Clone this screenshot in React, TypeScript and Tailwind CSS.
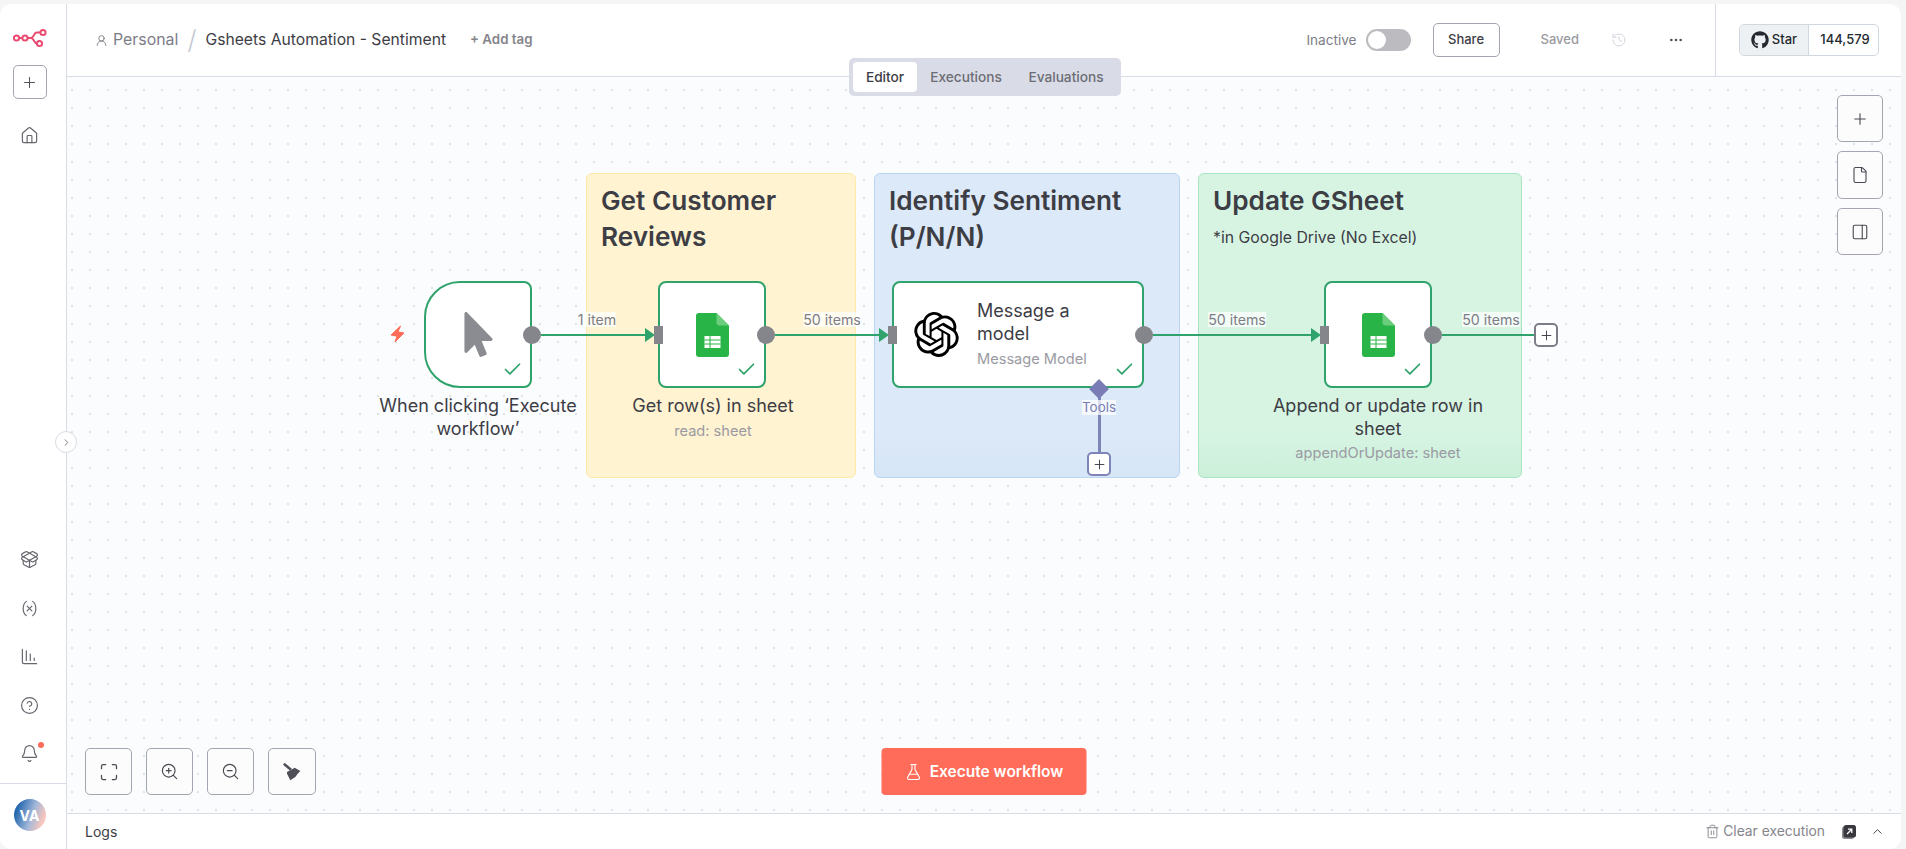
import type { ReactNode } from 'react'
import {
  Check, ChartColumnDecreasing, ChevronRight, ChevronUp, CircleHelp, Bell, Ellipsis, File,
  FlaskConical, History, House, Maximize, PackageOpen, PanelRight, Plus, Trash2, UserRound,
  Variable, ZoomIn, ZoomOut,
} from 'lucide-react'
import { FaGithub, FaMousePointer } from 'react-icons/fa'
import { SiOpenai } from 'react-icons/si'

function Logo() {
  return (
    <svg width="34" height="20" viewBox="0 0 34 20" fill="none" stroke="#ea4b71" strokeWidth="2">
      <circle cx="3.5" cy="10" r="2.6" />
      <circle cx="12" cy="10" r="2.6" />
      <circle cx="30" cy="4.5" r="2.6" />
      <circle cx="26.5" cy="15.5" r="2.6" />
      <path d="M6 10h3.4M14.6 10h3.4c3 0 2.6-5.5 6-5.5h3.4M18 10c3 0 3 5.5 6 5.5" />
    </svg>
  )
}

function SheetsIcon() {
  return (
    <svg width="33" height="44" viewBox="0 0 33 44">
      <path d="M20.5 0H3a3 3 0 0 0-3 3v38a3 3 0 0 0 3 3h27a3 3 0 0 0 3-3V12.5z" fill="#28b446" />
      <path d="M20.5 0v9.5a3 3 0 0 0 3 3H33z" fill="#6ace7c" />
      <path d="M8.5 23h16v12h-16z" fill="#fff" />
      <path d="M8.5 27h16M8.5 31h16M14 23v12" stroke="#28b446" strokeWidth="1" />
    </svg>
  )
}

function PopoutIcon() {
  return (
    <svg width="14" height="14" viewBox="0 0 14 14">
      <rect x="0" y="1.5" width="12" height="12.5" rx="2.5" fill="#8a8a90" />
      <rect x="1.5" y="0" width="12.5" height="12.5" rx="2.5" fill="#38383e" />
      <path d="M5 9l4.5-4.5M6 4.2h3.8V8" stroke="#fff" strokeWidth="1.3" fill="none" />
    </svg>
  )
}

function BroomIcon() {
  return (
    <svg width="18" height="18" viewBox="0 0 18 18" fill="#4f4f57">
      <path d="M0.8 0.8L8 6.8" stroke="#4f4f57" strokeWidth="2.6" />
      <path d="M4 9l7.7-4.3L17.3 8l-2.6 2.7-2.4 3.3-5 3.3-3.3-6.6z" />
    </svg>
  )
}

function BoltIcon() {
  return (
    <svg width="15" height="18" viewBox="0 0 15 18" className="absolute top-[248px] left-[323px]">
      <path
        d="M10.5 1L1 10l6 1.2L5 17l9-9-6-1.2z"
        fill="#ff6d5a"
        stroke="#ff6d5a"
        strokeWidth="1"
        strokeLinejoin="round"
      />
    </svg>
  )
}

function CanvasButton({ className, children }: { className?: string; children: ReactNode }) {
  return (
    <button className={`flex items-center justify-center rounded-[5px] border border-[#a3a5b0] bg-[#fcfcfd] text-[#4a4a52] ${className ?? ''}`}>
      {children}
    </button>
  )
}

function SideIcon({ children }: { children: ReactNode }) {
  return <div className="relative flex h-[48.5px] w-[33px] items-center justify-center text-[#66666e]">{children}</div>
}

function Sticky({ className, title, note }: { className: string; title: string; note?: string }) {
  return (
    <div className={`absolute top-[96px] h-[305px] rounded-[6px] border px-[14px] pt-[9px] ${className}`}>
      <h2 className="text-[26.2px] leading-[36px] font-semibold text-[#3d3d45]">{title}</h2>
      {note && <p className="mt-[8px] text-[15.8px] leading-[22px] text-[#3d3d45]">{note}</p>}
    </div>
  )
}

function NodeBox({ className, children }: { className: string; children: ReactNode }) {
  return (
    <div className={`absolute top-[204px] flex h-[107px] items-center border-2 border-[#2fa36b] bg-white ${className}`}>
      {children}
      <Check size={21} strokeWidth={2} className="absolute right-[7px] bottom-[6px] text-[#2fa36b]" />
    </div>
  )
}

function NodeLabel({ className, title, sub }: { className: string; title: string; sub?: string }) {
  return (
    <div className={`absolute top-[318px] w-[232px] text-center ${className}`}>
      <div className="text-[18px] leading-[22.6px] font-normal text-[#3d3d45]">{title}</div>
      {sub && <div className="mt-[3px] text-[14.6px] leading-[20px] text-[#9a9aa2]">{sub}</div>}
    </div>
  )
}

function EdgeLabel({ className, children }: { className: string; children: ReactNode }) {
  return <span className={`absolute top-[235px] -translate-x-1/2 bg-[#ffffffb8] text-[14.2px] leading-[15px] whitespace-nowrap text-[#7d7d87] ${className}`}>{children}</span>
}

function Port({ className }: { className: string }) {
  return <div className={`absolute top-[249px] h-[18px] w-[18px] rounded-full bg-[#85858c] ${className}`} />
}

function Input({ className }: { className: string }) {
  return <div className={`absolute top-[249px] h-[18px] w-[9px] bg-[#85858c] ${className}`} />
}

function Arrow({ className }: { className: string }) {
  return (
    <svg width="10" height="14" viewBox="0 0 10 14" className={`absolute top-[251px] ${className}`}>
      <path d="M0 0l10 7-10 7z" fill="#2fa36b" />
    </svg>
  )
}

function Edge({ className }: { className: string }) {
  return <div className={`absolute top-[256.5px] h-[2.5px] bg-[#2fa36b] ${className}`} />
}

export default function App() {
  return (
    <div className="flex h-screen w-screen overflow-hidden bg-[#f5f5f5] pt-[4px] pr-[5px] font-['Inter',sans-serif]">
      <div className="flex min-w-0 flex-1 overflow-hidden rounded-xl bg-white">

        {/* ── Sidebar ─────────────────────────────────────────── */}
        <aside className="relative z-20 flex w-[67px] shrink-0 flex-col border-r border-[#d9dce6] bg-white">
          <div className="flex flex-1 flex-col items-center pt-[24px] pr-[7px]">
            <Logo />
            <button className="mt-[17px] flex h-[34px] w-[34px] items-center justify-center rounded-[5px] border border-[#a3a5b0] text-[#55555d]">
              <Plus size={17} strokeWidth={1.5} />
            </button>
            <div className="mt-[12px]">
              <SideIcon><House size={19} strokeWidth={1.5} /></SideIcon>
            </div>
            <div className="mt-auto mb-[5px] flex flex-col items-center">
              <SideIcon><PackageOpen size={19} strokeWidth={1.5} /></SideIcon>
              <SideIcon><Variable size={19} strokeWidth={1.5} /></SideIcon>
              <SideIcon><ChartColumnDecreasing size={19} strokeWidth={1.5} /></SideIcon>
              <SideIcon><CircleHelp size={19} strokeWidth={1.5} /></SideIcon>
              <SideIcon>
                <Bell size={19} strokeWidth={1.5} />
                <span className="absolute top-[12px] right-[2px] h-[6px] w-[6px] rounded-full bg-[#ff6d5a]" />
              </SideIcon>
            </div>
          </div>
          <div className="flex h-[66px] items-start justify-center border-t border-[#d9dce6] pt-[15px] pr-[7px]">
            <div className="flex h-[32px] w-[32px] items-center justify-center rounded-full bg-[linear-gradient(110deg,#2568b0_15%,#a3b8d8_55%,#f9c7bd_85%)] text-[14px] font-bold text-white">
              VA
            </div>
          </div>
          <button className="absolute top-[427px] -right-[11px] flex h-[22px] w-[22px] items-center justify-center rounded-full border border-[#d9dce6] bg-white text-[#6d6d75]">
            <ChevronRight size={11} />
          </button>
        </aside>

        <main className="flex min-w-0 flex-1 flex-col">

          {/* ── Header ───────────────────────────────────────── */}
          <header className="flex h-[73px] shrink-0 items-center justify-between border-b border-[#d9dce6] pl-[28px]">
            <div className="flex items-center text-[#3d3d45]">
              <UserRound size={13} strokeWidth={1.5} className="text-[#6d6d75]" />
              <span className="ml-[5px] text-[15.9px] text-[#7d7d87]">Personal</span>
              <span className="mx-[9px] text-[26px] leading-none font-light text-[#c5c8d2]">/</span>
              <span className="text-[15.7px]">Gsheets Automation - Sentiment</span>
              <span className="ml-[24px] text-[13.3px] font-semibold text-[#85858c]">+ Add tag</span>
            </div>
            <div className="flex h-full items-center">
              <span className="text-[13.6px] text-[#7d7d87]">Inactive</span>
              <div className="ml-[9px] flex h-[22px] w-[45px] items-center rounded-full bg-[#bbbbc0] px-[2px]">
                <div className="h-[18px] w-[18px] rounded-full bg-white" />
              </div>
              <button className="ml-[22px] h-[34px] w-[67px] rounded-[5px] border border-[#a3a5b0] text-[13px] font-medium text-[#3d3d45]">Share</button>
              <span className="ml-[41px] text-[13px] font-medium text-[#9a9aa2]">Saved</span>
              <History size={16} strokeWidth={1.5} className="ml-[32px] text-[#d5d7df]" />
              <Ellipsis size={16} className="ml-[41px] text-[#55555d]" />
              <div className="ml-[31px] flex h-full items-center border-l border-[#d9dce6] pr-[22px] pl-[23px]">
                <div className="flex h-[32px] w-[140px] overflow-hidden rounded-[5px] border border-[#d0d7de] text-[13px] font-medium text-[#24292f]">
                  <div className="flex w-[69px] items-center justify-center gap-[3px] border-r border-[#d0d7de] bg-[#eef1f4]">
                    <FaGithub size={18} />
                    <span>Star</span>
                  </div>
                  <div className="flex flex-1 items-center justify-center pl-[3px]">144,579</div>
                </div>
              </div>
            </div>
          </header>

          {/* ── Canvas ───────────────────────────────────────── */}
          <div className="relative flex-1 bg-[#fbfcfe] bg-[radial-gradient(circle,#cbced7_0.5px,transparent_1px)] bg-[size:18px_18px] bg-[position:-4px_4px]">

            <div className="absolute top-[-19px] left-[782px] z-10 flex h-[38px] items-center rounded-[5px] bg-[#d9dce6] p-[4px] text-[13.7px] font-medium text-[#6d6d75]">
              <button className="flex h-[30px] w-[64px] items-center justify-center rounded-[4px] bg-white text-[#3d3d45]">Editor</button>
              <button className="h-[30px] w-[98px]">Executions</button>
              <button className="h-[30px] w-[102px]">Evaluations</button>
            </div>

            <Sticky className="left-[519px] w-[270px] border-[#fde9a8] bg-[#fff3d1]" title="Get Customer Reviews" />
            <Sticky className="left-[807px] w-[306px] border-[#bcd5f0] bg-[linear-gradient(#dce9f8_85%,#d6e6f6)]" title="Identify Sentiment (P/N/N)" />
            <Sticky className="left-[1131px] w-[324px] border-[#a8e6c3] bg-[linear-gradient(#d7f4e3_85%,#cbf0da)]" title="Update GSheet" note="*in Google Drive (No Excel)" />

            <BoltIcon />

            <Edge className="left-[474px] w-[104px]" />
            <Edge className="left-[708px] w-[104px]" />
            <Edge className="left-[1086px] w-[158px]" />
            <Edge className="left-[1375px] w-[92px]" />

            <EdgeLabel className="left-[530px]">1 item</EdgeLabel>
            <EdgeLabel className="left-[765px]">50 items</EdgeLabel>
            <EdgeLabel className="left-[1170px]">50 items</EdgeLabel>
            <EdgeLabel className="left-[1424px]">50 items</EdgeLabel>

            <NodeBox className="left-[357px] w-[108px] justify-center rounded-l-[36px] rounded-r-[8px]">
              <FaMousePointer size={45} className="text-[#8b8b92]" />
            </NodeBox>
            <NodeBox className="left-[591px] w-[108px] justify-center rounded-[8px]">
              <SheetsIcon />
            </NodeBox>
            <NodeBox className="left-[825px] w-[252px] rounded-[8px] pl-[20px]">
              <SiOpenai size={45} className="shrink-0 text-black" />
              <div className="ml-[18px] w-[125px]">
                <div className="text-[18px] leading-[22.6px] text-[#3d3d45]">Message a model</div>
                <div className="mt-[3px] text-[14.6px] leading-[20px] text-[#9a9aa2]">Message Model</div>
              </div>
            </NodeBox>
            <NodeBox className="left-[1257px] w-[108px] justify-center rounded-[8px]">
              <SheetsIcon />
            </NodeBox>

            <Arrow className="left-[578px]" />
            <Arrow className="left-[812px]" />
            <Arrow className="left-[1244px]" />
            <Input className="left-[587px]" />
            <Input className="left-[821px]" />
            <Input className="left-[1253px]" />
            <Port className="left-[456px]" />
            <Port className="left-[690px]" />
            <Port className="left-[1068px]" />
            <Port className="left-[1357px]" />

            <NodeLabel className="left-[295px]" title="When clicking ‘Execute workflow’" />
            <NodeLabel className="left-[530px]" title="Get row(s) in sheet" sub="read: sheet" />
            <NodeLabel className="left-[1195px]" title="Append or update row in sheet" sub="appendOrUpdate: sheet" />

            {/* Tools connector */}
            <div className="absolute top-[312px] left-[1031px] h-[64px] w-[2.5px] bg-[#7f84b8]" />
            <div className="absolute top-[305px] left-[1025px] h-[14px] w-[14px] rotate-45 bg-[#7a7db5]" />
            <span className="absolute top-[323px] left-[1032px] -translate-x-1/2 bg-[#ffffffb8] text-[13.5px] leading-[15px] text-[#7a7db5]">Tools</span>
            <button className="absolute top-[375px] left-[1020px] flex h-[24px] w-[24px] items-center justify-center rounded-[5px] border-[2.5px] border-[#7f84b8] bg-white text-[#3d3d45]">
              <Plus size={15} strokeWidth={1.5} />
            </button>
            <button className="absolute top-[246px] left-[1467px] flex h-[24px] w-[24px] items-center justify-center rounded-[5px] border-[2.5px] border-[#7d7d87] bg-white text-[#3d3d45]">
              <Plus size={15} strokeWidth={1.5} />
            </button>

            {/* Right toolbar */}
            <div className="absolute top-[18px] right-[18px] flex flex-col gap-[9px]">
              <CanvasButton className="h-[47px] w-[46px]"><Plus size={18} strokeWidth={1.5} /></CanvasButton>
              <CanvasButton className="h-[48px] w-[46px]"><File size={18} strokeWidth={1.5} /></CanvasButton>
              <CanvasButton className="h-[47px] w-[46px]"><PanelRight size={18} strokeWidth={1.5} /></CanvasButton>
            </div>

            {/* Bottom toolbar */}
            <div className="absolute bottom-[18px] left-[18px] flex gap-[14px]">
              <CanvasButton className="h-[47px] w-[47px]"><Maximize size={20} strokeWidth={1.5} /></CanvasButton>
              <CanvasButton className="h-[47px] w-[47px]"><ZoomIn size={19} strokeWidth={1.5} /></CanvasButton>
              <CanvasButton className="h-[47px] w-[47px]"><ZoomOut size={19} strokeWidth={1.5} /></CanvasButton>
              <CanvasButton className="h-[47px] w-[48px]"><BroomIcon /></CanvasButton>
            </div>

            <button className="absolute bottom-[18px] left-1/2 flex h-[47px] w-[205px] -translate-x-1/2 items-center justify-center gap-[7px] rounded-[4px] bg-[#ff6d5a] text-[15.5px] font-semibold text-white">
              <FlaskConical size={18} strokeWidth={1.5} />
              Execute workflow
            </button>
          </div>

          {/* ── Logs bar ─────────────────────────────────────── */}
          <div className="flex h-[36px] shrink-0 items-center border-t border-[#d9dce6] bg-white pr-[16px] pl-[18px] text-[#3d3d45]">
            <span className="text-[14px]">Logs</span>
            <div className="ml-auto flex items-center text-[#85858c]">
              <Trash2 size={15} strokeWidth={1.5} />
              <span className="ml-[3px] text-[13.8px]">Clear execution</span>
              <span className="ml-[17px]"><PopoutIcon /></span>
              <ChevronUp size={15} strokeWidth={1.5} className="ml-[14px] text-[#3d3d45]" />
            </div>
          </div>
        </main>
      </div>
    </div>
  )
}
